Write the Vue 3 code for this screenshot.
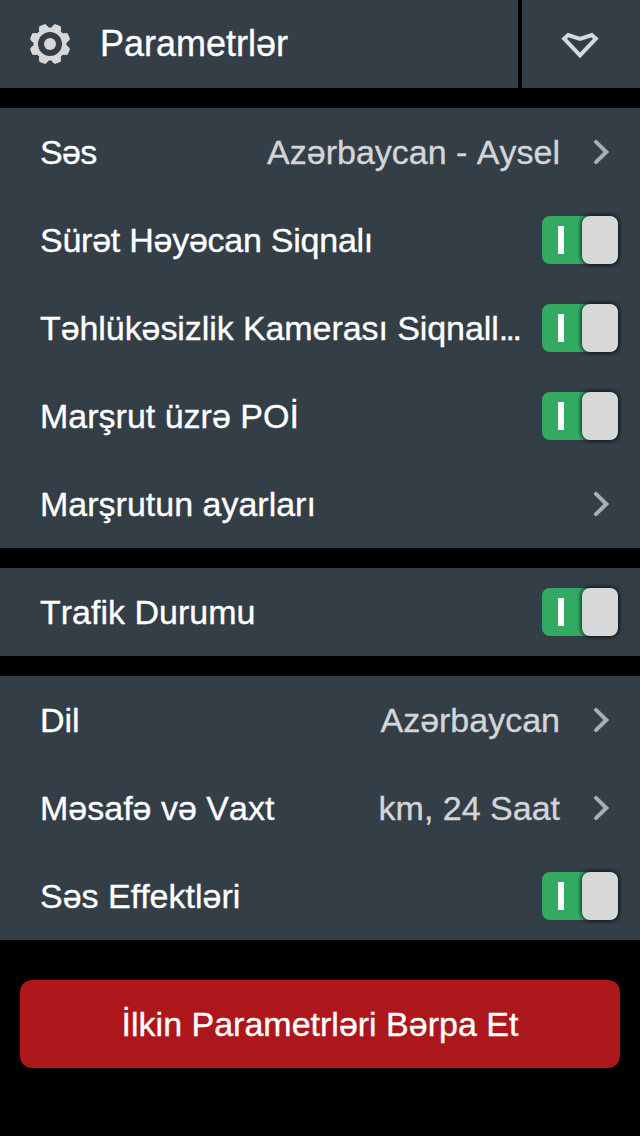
<script setup>
import { reactive } from 'vue'

const groups = reactive([
  [
    { label: 'Səs', tracking: -0.7, value: 'Azərbaycan - Aysel' },
    { label: 'Sürət Həyəcan Siqnalı', tracking: -0.25, on: true },
    { label: 'Təhlükəsizlik Kamerası Siqnall', tracking: -0.08, clipped: true, on: true },
    { label: 'Marşrut üzrə POİ', on: true },
    { label: 'Marşrutun ayarları', value: '' },
  ],
  [{ label: 'Trafik Durumu', on: true }],
  [
    { label: 'Dil', value: 'Azərbaycan' },
    { label: 'Məsafə və Vaxt', value: 'km, 24 Saat' },
    { label: 'Səs Effektləri', on: true },
  ],
])

const teeth = [22.5, 67.5, 112.5, 157.5, 202.5, 247.5, 292.5, 337.5]
</script>

<template>
  <div class="screen">
    <header class="header">
      <div class="header-title">
        <svg class="gear" width="42" height="42" viewBox="-21 -21 42 42">
          <circle r="14.3" fill="none" stroke="#d7d8da" stroke-width="4.6" />
          <path
            v-for="angle in teeth"
            :key="angle"
            d="M-5.2 -15.5L-4.5 -18L-3.1 -20.4H3.1L4.5 -18L5.2 -15.5Z"
            :transform="`rotate(${angle})`"
            fill="#d7d8da"
          />
          <circle r="6" fill="#d7d8da" />
        </svg>
        <h1>Parametrlər</h1>
      </div>
      <button class="header-close" aria-label="Bağla">
        <svg width="40" height="30" viewBox="0 0 40 30">
          <path
            d="M4.1 9.7L8.2 6L20 9.8L31.8 6L35.9 9.7L20 26.4Z"
            fill="none"
            stroke="#d7d8da"
            stroke-width="4"
          />
        </svg>
      </button>
    </header>

    <section v-for="(rows, index) in groups" :key="index" class="group">
      <div v-for="row in rows" :key="row.label" class="row">
        <span class="label" :style="{ letterSpacing: `${row.tracking || 0}px` }">{{ row.label }}<span v-if="row.clipped" class="dots">...</span></span>
        <button
          v-if="'on' in row"
          class="switch"
          :class="{ 'is-on': row.on }"
          role="switch"
          :aria-checked="row.on"
          @click="row.on = !row.on"
        >
          <span class="switch-mark"></span>
          <span class="switch-knob"></span>
        </button>
        <template v-else>
          <span class="value">{{ row.value }}</span>
          <svg class="chevron" width="18" height="28" viewBox="0 0 18 28">
            <path
              d="M4 3.8L14.3 14L4 24.2"
              fill="none"
              stroke="#a5b0ba"
              stroke-width="4"
              stroke-linecap="round"
            />
          </svg>
        </template>
      </div>
    </section>

    <button class="reset">İlkin Parametrləri Bərpa Et</button>
  </div>
</template>

<style>
body {
  background: #000;
}
</style>

<style scoped>
.screen {
  display: flex;
  flex-direction: column;
  gap: 20px;
  width: 640px;
  height: 1136px;
  background: #000;
  color: #fff;
  font-family: "Liberation Sans", Arial, sans-serif;
  font-size: 34px;
  font-kerning: none;
  -webkit-text-stroke: 0.35px currentColor;
  overflow: hidden;
}

button {
  border: 0;
  padding: 0;
  color: inherit;
  font: inherit;
  font-kerning: none;
}

.header {
  display: flex;
  gap: 4px;
  height: 88px;
}

.header-title {
  flex: 1;
  display: flex;
  align-items: center;
  gap: 29px;
  padding-left: 29px;
  background: #343e47;
}

h1 {
  margin: 0;
  font-size: 36px;
  font-weight: 400;
}

.header-close {
  display: flex;
  align-items: center;
  justify-content: center;
  width: 118px;
  padding-right: 2px;
  box-sizing: border-box;
  background: #343e47;
}

.group {
  background: #343e47;
}

.row {
  display: flex;
  align-items: center;
  height: 88px;
  padding: 0 22px 0 40px;
  line-height: 40px;
}

.label {
  flex: 1;
  white-space: nowrap;
}

.dots {
  letter-spacing: -2.6px;
}

.value {
  color: #d3d5d8;
  white-space: nowrap;
}

.chevron {
  margin: 0 8px 0 32px;
}

.switch {
  display: flex;
  align-items: center;
  justify-content: space-between;
  flex: none;
  width: 76px;
  height: 48px;
  border-radius: 8px;
  background: #6b747d;
}

.switch.is-on {
  background: #33aa62;
}

.switch:not(.is-on) {
  flex-direction: row-reverse;
}

.switch-mark {
  width: 6px;
  height: 28px;
  margin: 0 16px;
  background: #fff;
}

.switch-knob {
  width: 36px;
  height: 48px;
  border-radius: 8px;
  background: #d7d8da;
  box-shadow: 0 0 4px 1px rgba(0, 0, 0, 0.8);
}

.reset {
  height: 88px;
  margin: 20px 20px 0;
  border-radius: 12px;
  background: #ad171c;
}
</style>
